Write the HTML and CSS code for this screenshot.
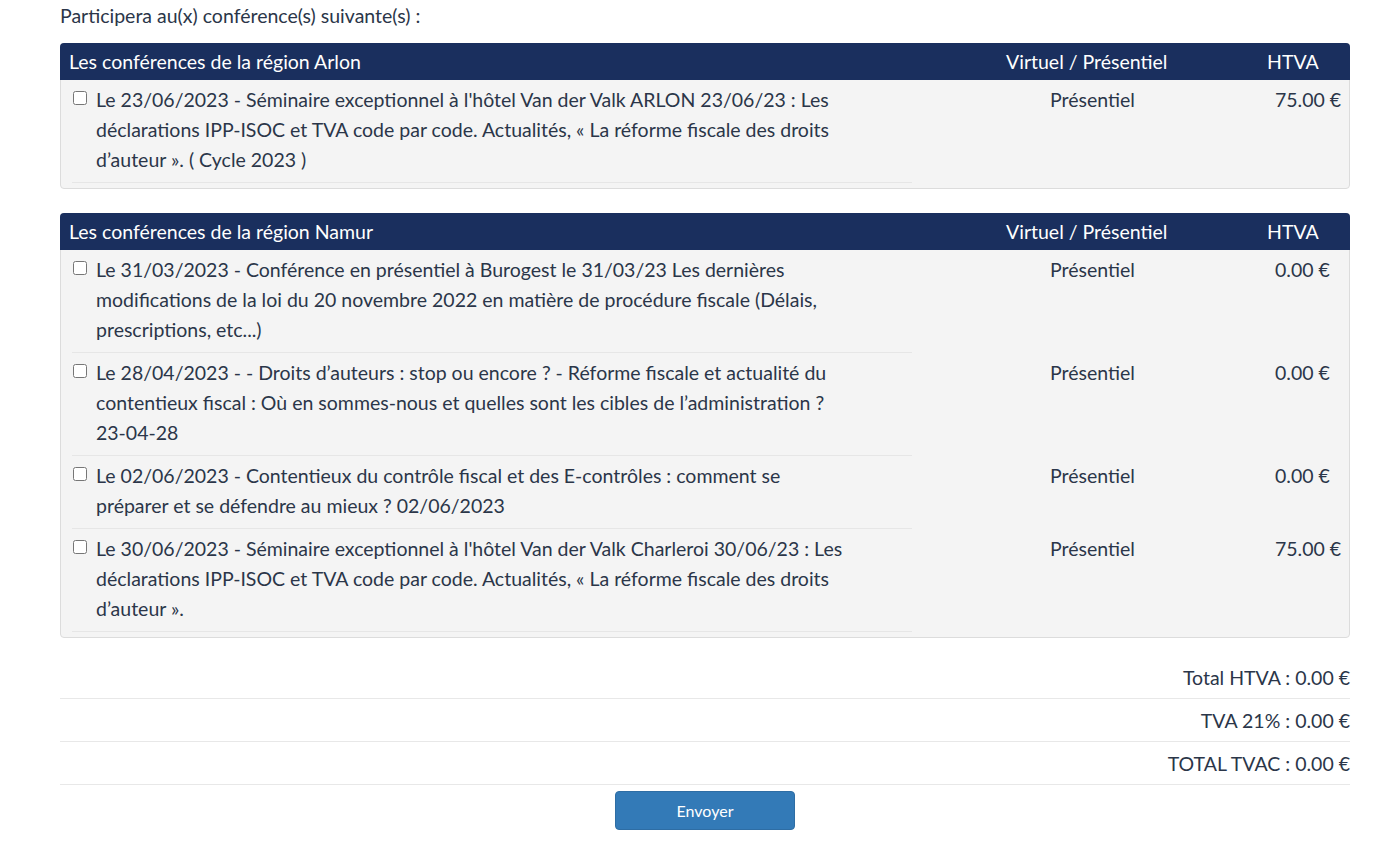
FILE: index.html
```html
<!DOCTYPE html>
<html lang="fr">
<head>
<meta charset="utf-8">
<title>Conférences</title>
<link rel="stylesheet" href="styles.css">
</head>
<body>
<div class="page">
  <p class="intro">Participera au(x) conférence(s) suivante(s) :</p>

  <section class="panel">
    <div class="panel-head">
      <div class="h-title">Les conférences de la région Arlon</div>
      <div class="h-mode">Virtuel / Présentiel</div>
      <div class="h-price">HTVA</div>
    </div>
    <div class="row">
      <label class="conf"><input type="checkbox"><span>Le 23/06/2023 - Séminaire exceptionnel à l'hôtel Van der Valk ARLON 23/06/23 : Les déclarations IPP-ISOC et TVA code par code. Actualités, « La réforme fiscale des droits d’auteur ». ( Cycle 2023 )</span></label>
      <div class="mode">Présentiel</div>
      <div class="price">75.00 €</div>
    </div>
  </section>

  <section class="panel">
    <div class="panel-head">
      <div class="h-title">Les conférences de la région Namur</div>
      <div class="h-mode">Virtuel / Présentiel</div>
      <div class="h-price">HTVA</div>
    </div>
    <div class="row">
      <label class="conf"><input type="checkbox"><span>Le 31/03/2023 - Conférence en présentiel à Burogest le 31/03/23 Les dernières modifications de la loi du 20 novembre 2022 en matière de procédure fiscale (Délais, prescriptions, etc...)</span></label>
      <div class="mode">Présentiel</div>
      <div class="price">0.00 €</div>
    </div>
    <div class="row">
      <label class="conf"><input type="checkbox"><span>Le 28/04/2023 - - Droits d’auteurs : stop ou encore ? - Réforme fiscale et actualité du contentieux fiscal : Où en sommes-nous et quelles sont les cibles de l’administration ? <span class="nw">23-04-28</span></span></label>
      <div class="mode">Présentiel</div>
      <div class="price">0.00 €</div>
    </div>
    <div class="row">
      <label class="conf"><input type="checkbox"><span>Le 02/06/2023 - Contentieux du contrôle fiscal et des E-contrôles : comment se préparer et se défendre au mieux ? 02/06/2023</span></label>
      <div class="mode">Présentiel</div>
      <div class="price">0.00 €</div>
    </div>
    <div class="row">
      <label class="conf"><input type="checkbox"><span>Le 30/06/2023 - Séminaire exceptionnel à l'hôtel Van der Valk Charleroi 30/06/23 : Les déclarations IPP-ISOC et TVA code par code. Actualités, « La réforme fiscale des droits d’auteur ».</span></label>
      <div class="mode">Présentiel</div>
      <div class="price">75.00 €</div>
    </div>
  </section>

  <div class="totals">
    <div class="total">Total HTVA : 0.00 €</div>
    <div class="total">TVA 21% : 0.00 €</div>
    <div class="total">TOTAL TVAC : 0.00 €</div>
  </div>

  <div class="actions">
    <button class="btn" type="button">Envoyer</button>
  </div>
</div>
</body>
</html>
```

FILE: styles.css
```css
* { box-sizing: border-box; }
html, body { margin: 0; padding: 0; background: #fff; }
body {
  font-family: Lato, "Noto Sans", sans-serif;
  font-size: 19.5px;
  color: #2b3649;
}
.page {
  padding: 0 36px 0 60px;
}
.intro {
  margin: 0;
  padding-top: 3px;
  height: 43px;
  line-height: 26px;
}
.panel {
  background: #f4f4f4;
  border: 1px solid #dcdcdc;
  border-radius: 4px;
  margin-bottom: 24px;
  padding-bottom: 5px;
}
.panel-head, .row {
  display: grid;
  grid-template-columns: 940px 260px 1fr;
}
.panel-head {
  background: #1a2f5e;
  color: #fff;
  height: 37px;
  line-height: 37px;
  margin: -1px -1px 0 -1px;
  border-radius: 4px 4px 0 0;
}
.h-title { padding-left: 9px; }
.h-mode { padding-left: 6px; }
.h-price { padding-left: 7px; }
.row {
  line-height: 30px;
}
.conf {
  display: flex;
  align-items: flex-start;
  gap: 9px;
  margin-left: 11px;
  width: 840px;
  padding: 5px 0 7px;
  border-bottom: 1px solid #e6e6e6;
}
.conf > span { max-width: 756px; }
.nw { white-space: nowrap; }
.conf input {
  margin: 6px 0 0 1px;
  width: 14px;
  height: 14px;
  flex: none;
}
.row .mode { padding: 5px 0 0 49px; }
.row .price { padding: 5px 0 0 14px; }
.totals { margin-top: -6px; }
.total {
  text-align: right;
  height: 43px;
  line-height: 42px;
  border-bottom: 1px solid #e8e8e8;
  padding-top: 1px;
}
.actions {
  display: flex;
  justify-content: center;
  padding-top: 6px;
}
.btn {
  width: 180px;
  height: 39px;
  background: #337ab7;
  color: #fff;
  border: 1px solid #2e6da4;
  border-radius: 4px;
  font-family: Lato, "Noto Sans", sans-serif;
  font-size: 16px;
}
```
